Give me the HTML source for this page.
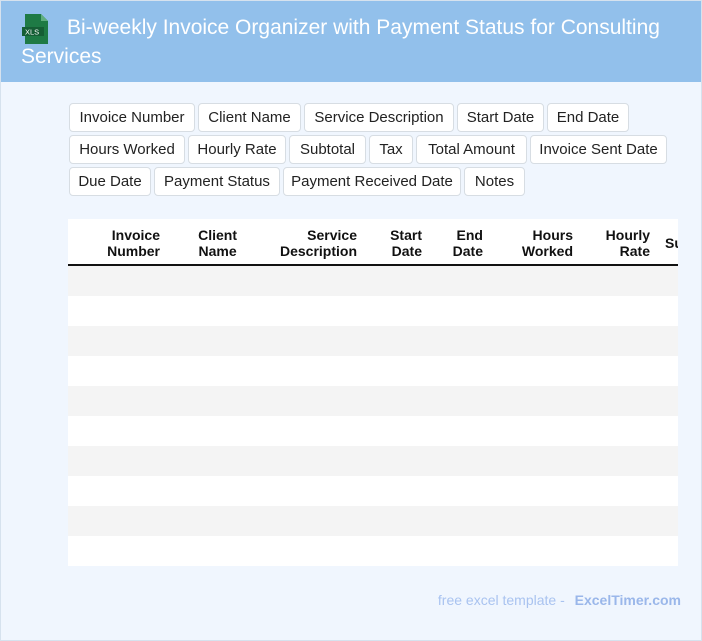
<!DOCTYPE html>
<html><head><meta charset="utf-8"><style>
*{box-sizing:border-box;margin:0;padding:0}
body{width:702px;height:641px;overflow:hidden;background:#f0f6fe;font-family:"Liberation Sans",Arial,sans-serif;position:relative}
.frame{position:absolute;left:0;top:0;width:702px;height:641px;border:1px solid #d6e2ee;pointer-events:none}
.hdr{position:absolute;left:0;top:0;width:702px;height:82px;background:#92c0eb}
.title{position:absolute;left:21px;top:13px;width:670px;color:#fff;font-size:21px;line-height:29px;text-indent:46px}
.icon{position:absolute;left:22px;top:14px;width:28px;height:30px}
.tag{position:absolute;height:29px;background:#fff;border:1px solid #d7dde3;border-radius:4px;font-size:15px;color:#222;line-height:27px;text-align:center;white-space:nowrap}
.tbl{position:absolute;left:68px;top:219px;width:610px;height:347px;background:#fff;overflow:hidden}
.th{position:absolute;top:8px;font-weight:bold;font-size:14px;line-height:16px;color:#111;text-align:right;white-space:nowrap}
.line{position:absolute;left:0;top:45px;width:610px;height:2px;background:#111}
.row{position:absolute;left:0;width:610px;height:30px}
.foot{position:absolute;right:21px;top:592px;font-size:14px;color:#a9c3f0}
.foot b{color:#9ab7ea;margin-left:6px}
</style></head><body>
<div class="hdr"></div>
<svg class="icon" viewBox="0 0 28 30"><path d="M3 0h16l7 7v23H3z" fill="#1e7a45"/><path d="M19 0v7h7z" fill="#5fae7e"/><rect x="0" y="13" width="22" height="9" fill="#155e35"/><text x="3" y="20.5" font-size="7.5" fill="#fff" font-family="Liberation Sans">XLS</text></svg>
<div class="title">Bi-weekly Invoice Organizer with Payment Status for Consulting Services</div>

<div class="tag" style="left:69px;top:103px;width:126px">Invoice Number</div>
<div class="tag" style="left:198px;top:103px;width:103px">Client Name</div>
<div class="tag" style="left:304px;top:103px;width:150px">Service Description</div>
<div class="tag" style="left:457px;top:103px;width:87px">Start Date</div>
<div class="tag" style="left:547px;top:103px;width:82px">End Date</div>
<div class="tag" style="left:69px;top:135px;width:116px">Hours Worked</div>
<div class="tag" style="left:188px;top:135px;width:98px">Hourly Rate</div>
<div class="tag" style="left:289px;top:135px;width:77px">Subtotal</div>
<div class="tag" style="left:369px;top:135px;width:44px">Tax</div>
<div class="tag" style="left:416px;top:135px;width:111px">Total Amount</div>
<div class="tag" style="left:530px;top:135px;width:137px">Invoice Sent Date</div>
<div class="tag" style="left:69px;top:167px;width:82px">Due Date</div>
<div class="tag" style="left:154px;top:167px;width:126px">Payment Status</div>
<div class="tag" style="left:283px;top:167px;width:178px">Payment Received Date</div>
<div class="tag" style="left:464px;top:167px;width:61px">Notes</div>

<div class="tbl">
<div class="th" style="right:518px">Invoice<br>Number</div>
<div class="th" style="right:441px;text-align:center">Client<br>Name</div>
<div class="th" style="right:321px">Service<br>Description</div>
<div class="th" style="right:256px">Start<br>Date</div>
<div class="th" style="right:195px">End<br>Date</div>
<div class="th" style="right:105px">Hours<br>Worked</div>
<div class="th" style="right:28px">Hourly<br>Rate</div>
<div class="th" style="left:597px;top:16px;text-align:left">Subtotal</div>
<div class="line"></div>
<div class="row" style="top:47px;background:#f4f4f4"></div>
<div class="row" style="top:107px;background:#f4f4f4"></div>
<div class="row" style="top:167px;background:#f4f4f4"></div>
<div class="row" style="top:227px;background:#f4f4f4"></div>
<div class="row" style="top:287px;background:#f4f4f4"></div>
</div>
<div class="foot">free excel template - <b>ExcelTimer.com</b></div>
<div class="frame"></div>
</body></html>
